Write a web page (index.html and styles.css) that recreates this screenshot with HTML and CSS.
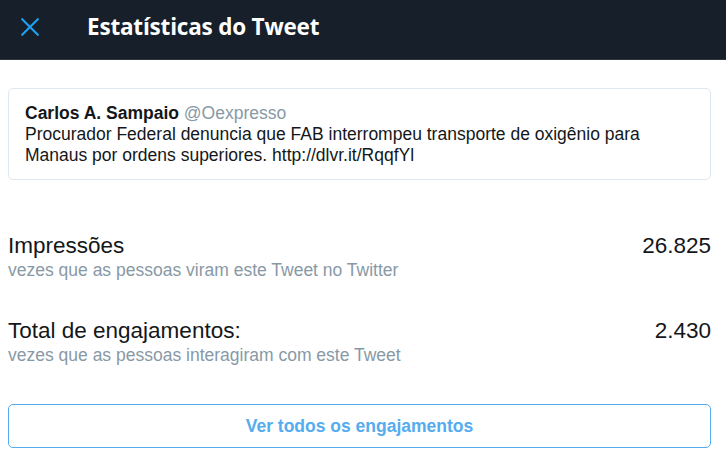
FILE: index.html
```html
<!DOCTYPE html>
<html lang="pt">
<head>
<meta charset="utf-8">
<link rel="stylesheet" href="styles.css">
</head>
<body>
<header class="topbar">
  <button class="close" aria-label="Fechar">
    <svg width="18" height="18" viewBox="0 0 18 18"><path d="M1.2 1.2 L16.8 16.8 M16.8 1.2 L1.2 16.8" stroke="#1da1f2" stroke-width="2.1" stroke-linecap="round"/></svg>
  </button>
  <h1 class="title">Estatísticas do Tweet</h1>
</header>
<main class="content">
  <div class="tweet">
    <div class="tweet-head"><span class="name">Carlos A. Sampaio</span> <span class="handle">@Oexpresso</span></div>
    <p class="tweet-text">Procurador Federal denuncia que FAB interrompeu transporte de oxigênio para Manaus por ordens superiores. http://dlvr.it/RqqfYl</p>
  </div>
  <section class="stat">
    <div class="stat-row"><span class="stat-label">Impressões</span><span class="stat-value">26.825</span></div>
    <div class="stat-sub">vezes que as pessoas viram este Tweet no Twitter</div>
  </section>
  <section class="stat">
    <div class="stat-row"><span class="stat-label">Total de engajamentos:</span><span class="stat-value">2.430</span></div>
    <div class="stat-sub">vezes que as pessoas interagiram com este Tweet</div>
  </section>
  <button class="all-btn">Ver todos os engajamentos</button>
</main>
</body>
</html>
```
FILE: styles.css
```css
* { box-sizing: border-box; }
html, body { margin: 0; padding: 0; background: #fff; }
body { font-family: "Liberation Sans", Arial, sans-serif; width: 726px; height: 450px; overflow: hidden; }
.topbar {
  height: 60px;
  background: #17202a;
  border-bottom: 1px solid #2c3640;
  display: flex;
  align-items: center;
  padding-left: 21px;
  padding-bottom: 5px;
}
.close {
  background: none; border: 0; padding: 0; margin: 0;
  width: 18px; height: 18px; display: flex;
}
.title {
  margin: 0 0 0 48px;
  color: #fff;
  font-family: "Open Sans", sans-serif;
  font-weight: 700;
  font-size: 22.5px;
  line-height: 28px;
  letter-spacing: -0.2px;
}
.content { padding: 28px 15px 0 8px; }
.tweet {
  border: 1px solid #e1e8ed;
  border-radius: 5px;
  padding: 14px 16px 0 16px;
  height: 92px;
  font-size: 17.5px;
  line-height: 21px;
  color: #14171a;
}
.name { font-weight: 700; }
.handle { color: #8899a6; }
.tweet-text { margin: 0; }
.stat { margin-top: 54px; }
.stat + .stat { margin-top: 39px; }
.stat-row { display: flex; justify-content: space-between; font-size: 22.5px; line-height: 24px; color: #14171a; }
.stat-sub { color: #8899a6; font-size: 17.5px; line-height: 19px; margin-top: 3px; }
.all-btn {
  display: block;
  width: 703px;
  height: 44px;
  margin-top: 39px;
  border: 1px solid #55acee;
  border-radius: 5px;
  background: #fff;
  color: #55acee;
  font-family: "Liberation Sans", Arial, sans-serif;
  font-weight: 700;
  font-size: 17.5px;
}
```
